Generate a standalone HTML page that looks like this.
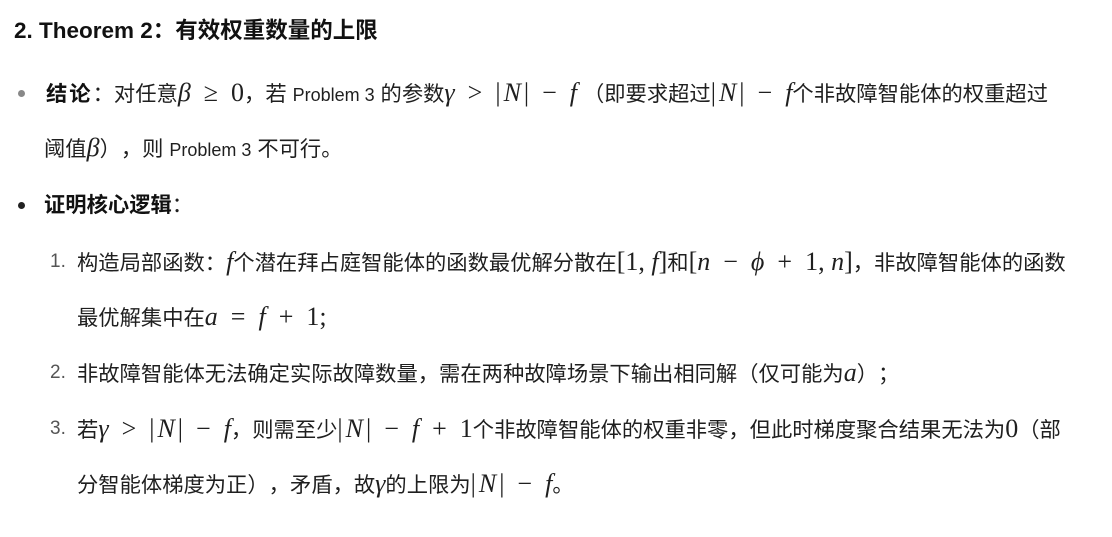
<!DOCTYPE html>
<html><head><meta charset="utf-8"><style>
body{margin:0;background:#fff;width:1112px;height:537px;overflow:hidden;font-family:"Liberation Sans","Noto Sans CJK SC",sans-serif;color:#1f1f1f;font-size:21.3px;text-spacing-trim:space-all}
.l{position:absolute;white-space:nowrap;line-height:26px}
.m{font-family:"Liberation Serif",serif;font-size:26px}
i{font-family:"Liberation Serif",serif;font-size:26px}
.m i{font-size:inherit}
.b{padding:0 3px}
.o{padding:0 13px;font-family:"Liberation Serif",serif;font-size:26px}
.p{font-size:18px}
h2{position:absolute;left:14px;top:16px;margin:0;font-size:22.5px;font-weight:bold;white-space:nowrap;color:#111;line-height:30px}
.dot{position:absolute;width:7px;height:7px;border-radius:50%;background:#333}
.n{position:absolute;color:#555;font-size:19px}
b{color:#111}
.ls{letter-spacing:2px}
</style></head><body>
<h2>2. Theorem 2：有效权重数量的上限</h2>
<div class="dot" style="left:18px;top:90px;background:#888"></div>
<div class="l" style="left:46px;top:80px"><b class="ls">结论</b>：对任意<i>β</i><span class="o">≥</span><span class="m">0</span>，若 <span class="p">Problem 3</span> 的参数<i>γ</i><span class="o">&gt;</span><span class="m">|<i class="b">N</i>|</span><span class="o">−</span><i>f</i> （即要求超过<span class="m">|<i class="b">N</i>|</span><span class="o">−</span><i>f</i>个非故障智能体的权重超过</div>
<div class="l" style="left:44px;top:135px">阈值<i>β</i>），则 <span class="p">Problem 3</span> 不可行。</div>
<div class="dot" style="left:18px;top:202px;background:#222"></div>
<div class="l" style="left:44px;top:192px"><b>证明核心逻辑</b>：</div>
<div class="n l" style="left:50px;top:249px">1.</div>
<div class="l" style="left:77px;top:249px">构造局部函数：<i>f</i>个潜在拜占庭智能体的函数最优解分散在<span class="m">[1, <i>f</i>]</span>和<span class="m">[<i>n</i></span><span class="o">−</span><i>ϕ</i><span class="o">+</span><span class="m">1, <i>n</i>]</span>，非故障智能体的函数</div>
<div class="l" style="left:77px;top:304px">最优解集中在<i>a</i><span class="o">=</span><i>f</i><span class="o">+</span><span class="m">1;</span></div>
<div class="n l" style="left:50px;top:360px">2.</div>
<div class="l" style="left:77px;top:360px">非故障智能体无法确定实际故障数量，需在两种故障场景下输出相同解（仅可能为<i>a</i>）；</div>
<div class="n l" style="left:50px;top:416px">3.</div>
<div class="l" style="left:77px;top:416px">若<i>γ</i><span class="o">&gt;</span><span class="m">|<i class="b">N</i>|</span><span class="o">−</span><i>f</i>，则需至少<span class="m">|<i class="b">N</i>|</span><span class="o">−</span><i>f</i><span class="o">+</span><span class="m">1</span>个非故障智能体的权重非零，但此时梯度聚合结果无法为<span class="m">0</span>（部</div>
<div class="l" style="left:77px;top:471px">分智能体梯度为正），矛盾，故<i>γ</i>的上限为<span class="m">|<i class="b">N</i>|</span><span class="o">−</span><i>f</i>。</div>
</body></html>
